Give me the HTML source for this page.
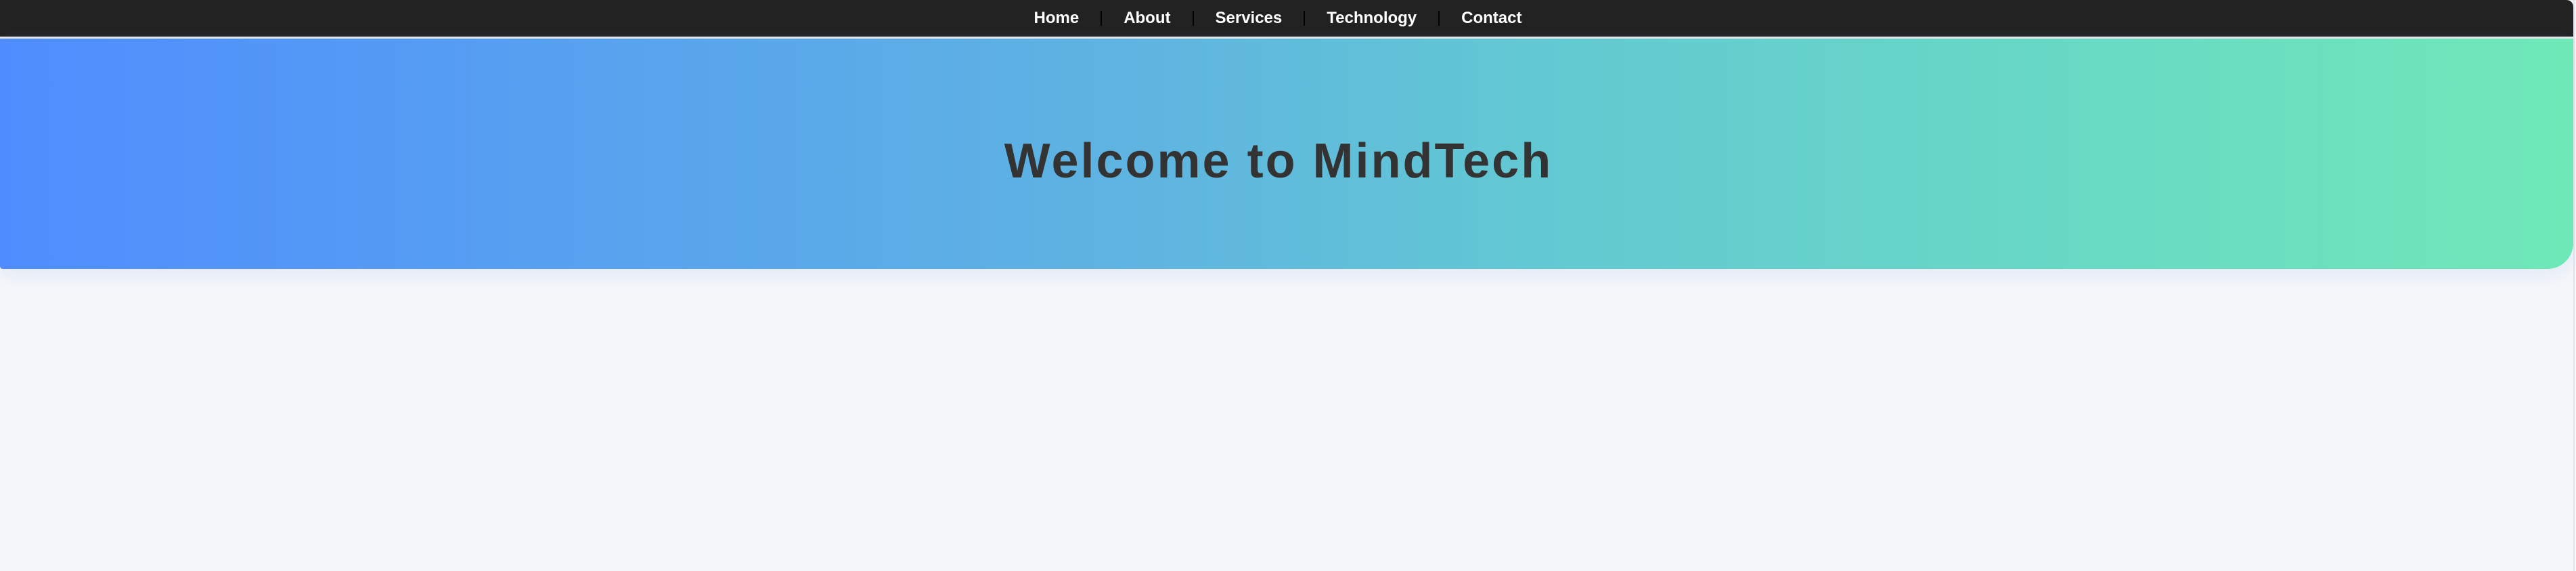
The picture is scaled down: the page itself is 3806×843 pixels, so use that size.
<!DOCTYPE html>
<html><head><meta charset="utf-8"><style>
html,body{margin:0;padding:0}
body{width:3806px;height:843px;background:#f5f7fa;font-family:"Liberation Sans",Arial,sans-serif;overflow:hidden;position:relative}
.wrap{position:absolute;left:0;top:0;width:3802px;height:843px;border-right:2px solid #e2e4e8}
nav{height:54px;background:#222;border-top-right-radius:10px;border-bottom:3px solid #e8e8e8;display:flex;justify-content:center;align-items:center}
nav .in{display:flex;align-items:center;margin-left:-26px}
nav a{color:#fff;font-weight:bold;font-size:24px;text-decoration:none}
nav i{display:inline-block;width:2px;height:22px;background:#000;margin:0 32px}
.hero{height:340px;background:linear-gradient(90deg,#4f8dff,#5fb5e0 45%,#62c9d2 60%,#6fe8b8);border-radius:0 0 38px 4px;box-shadow:0 10px 30px rgba(150,180,230,.2);display:flex;align-items:center;justify-content:center}
h1{margin:0;font-size:72px;letter-spacing:3px;color:#333;font-weight:bold;position:relative;top:11px;left:-12px}
</style></head><body><div class="wrap">
<nav><div class="in"><a>Home</a><i></i><a>About</a><i></i><a>Services</a><i></i><a>Technology</a><i></i><a>Contact</a></div></nav>
<div class="hero"><h1>Welcome to MindTech</h1></div>
</div></body></html>
